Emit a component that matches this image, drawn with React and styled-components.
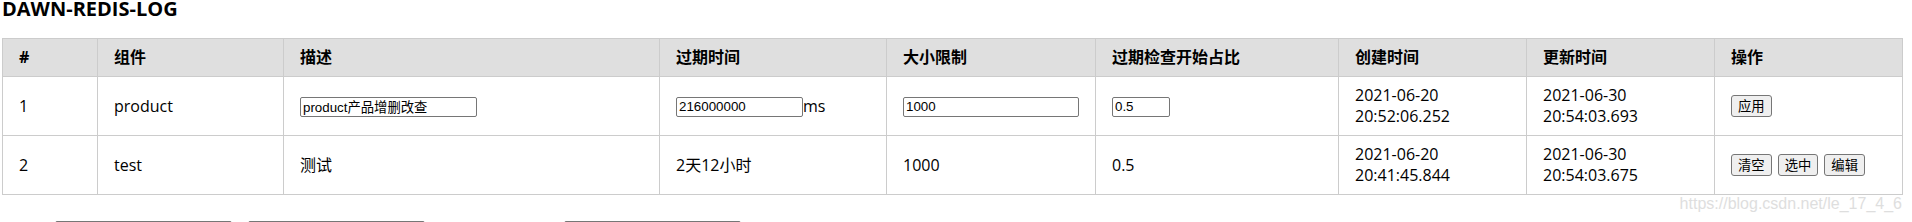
import React from "react";
import styled, { createGlobalStyle } from "styled-components";

const GlobalStyle = createGlobalStyle`
  body {
    margin: 0;
    background: #fff;
    color: #000;
    font-family: "Open Sans", "Noto Sans CJK SC", sans-serif;
  }
`;

const Page = styled.div`
  position: relative;
  width: 1912px;
  height: 222px;
  overflow: hidden;
  padding-left: 2px;
  box-sizing: border-box;
`;

const Title = styled.h3`
  margin: 0;
  font-size: 20px;
  font-weight: 700;
  line-height: 18px;
  height: 38px;
`;

const Table = styled.table`
  border-collapse: collapse;
  table-layout: fixed;
  width: 1900px;
  font-size: 16px;
  line-height: 21px;
`;

const Th = styled.th`
  background: #dfdfdf;
  border: 1px solid #cccccc;
  padding: 8px 16px;
  text-align: left;
  font-weight: 700;
`;

const Td = styled.td`
  border: 1px solid #cccccc;
  padding: 8px 16px;
  height: 42px;
  vertical-align: middle;
`;

const TextInput = styled.input`
  box-sizing: border-box;
  width: ${(p) => p.$w}px;
  height: 20px;
  padding: 1px 2px;
  border: 1px solid #767676;
  border-radius: 2px;
  font-family: "Liberation Sans", "Noto Sans CJK SC", sans-serif;
  font-size: 13.33px;
  color: #000;
  background: #fff;
  vertical-align: middle;
`;

const Unit = styled.span`
  vertical-align: middle;
`;

const Actions = styled.div`
  display: flex;
  gap: 6px;
`;

const Button = styled.button`
  box-sizing: border-box;
  height: 22px;
  padding: 0 6px;
  border: 1px solid #767676;
  border-radius: 3px;
  background: #efefef;
  font-family: "Noto Sans CJK SC", sans-serif;
  font-size: 13.33px;
  line-height: 18px;
  color: #000;
`;

const Filters = styled.div`
  display: flex;
  padding-left: 53px;
  margin-top: 26px;
`;

const FilterInput = styled.input`
  box-sizing: border-box;
  width: 177px;
  height: 21px;
  margin-left: ${(p) => p.$gap || 0}px;
  border: 1px solid #767676;
  border-radius: 2px;
  background: #fff;
`;

const Watermark = styled.div`
  position: absolute;
  right: 10px;
  top: 195px;
  font-family: "Liberation Sans", sans-serif;
  font-size: 16px;
  line-height: 18px;
  color: #dedede;
`;

const columns = [
  ["#", 95],
  ["组件", 186],
  ["描述", 376],
  ["过期时间", 227],
  ["大小限制", 209],
  ["过期检查开始占比", 243],
  ["创建时间", 188],
  ["更新时间", 188],
  ["操作", 188],
];

export default function App() {
  return (
    <Page>
      <GlobalStyle />
      <Title>DAWN-REDIS-LOG</Title>
      <Table>
        <colgroup>
          {columns.map(([name, w]) => (
            <col key={name} style={{ width: w }} />
          ))}
        </colgroup>
        <thead>
          <tr>
            {columns.map(([name]) => (
              <Th key={name}>{name}</Th>
            ))}
          </tr>
        </thead>
        <tbody>
          <tr>
            <Td>1</Td>
            <Td>product</Td>
            <Td>
              <TextInput $w={177} defaultValue="product产品增删改查" />
            </Td>
            <Td>
              <TextInput $w={127} defaultValue="216000000" />
              <Unit>ms</Unit>
            </Td>
            <Td>
              <TextInput $w={176} defaultValue="1000" />
            </Td>
            <Td>
              <TextInput $w={58} defaultValue="0.5" />
            </Td>
            <Td>
              2021-06-20
              <br />
              20:52:06.252
            </Td>
            <Td>
              2021-06-30
              <br />
              20:54:03.693
            </Td>
            <Td>
              <Actions>
                <Button>应用</Button>
              </Actions>
            </Td>
          </tr>
          <tr>
            <Td>2</Td>
            <Td>test</Td>
            <Td>测试</Td>
            <Td>2天12小时</Td>
            <Td>1000</Td>
            <Td>0.5</Td>
            <Td>
              2021-06-20
              <br />
              20:41:45.844
            </Td>
            <Td>
              2021-06-30
              <br />
              20:54:03.675
            </Td>
            <Td>
              <Actions>
                <Button>清空</Button>
                <Button>选中</Button>
                <Button>编辑</Button>
              </Actions>
            </Td>
          </tr>
        </tbody>
      </Table>
      <Filters>
        <FilterInput />
        <FilterInput $gap={16} />
        <FilterInput $gap={139} />
      </Filters>
      <Watermark>https://blog.csdn.net/le_17_4_6</Watermark>
    </Page>
  );
}
